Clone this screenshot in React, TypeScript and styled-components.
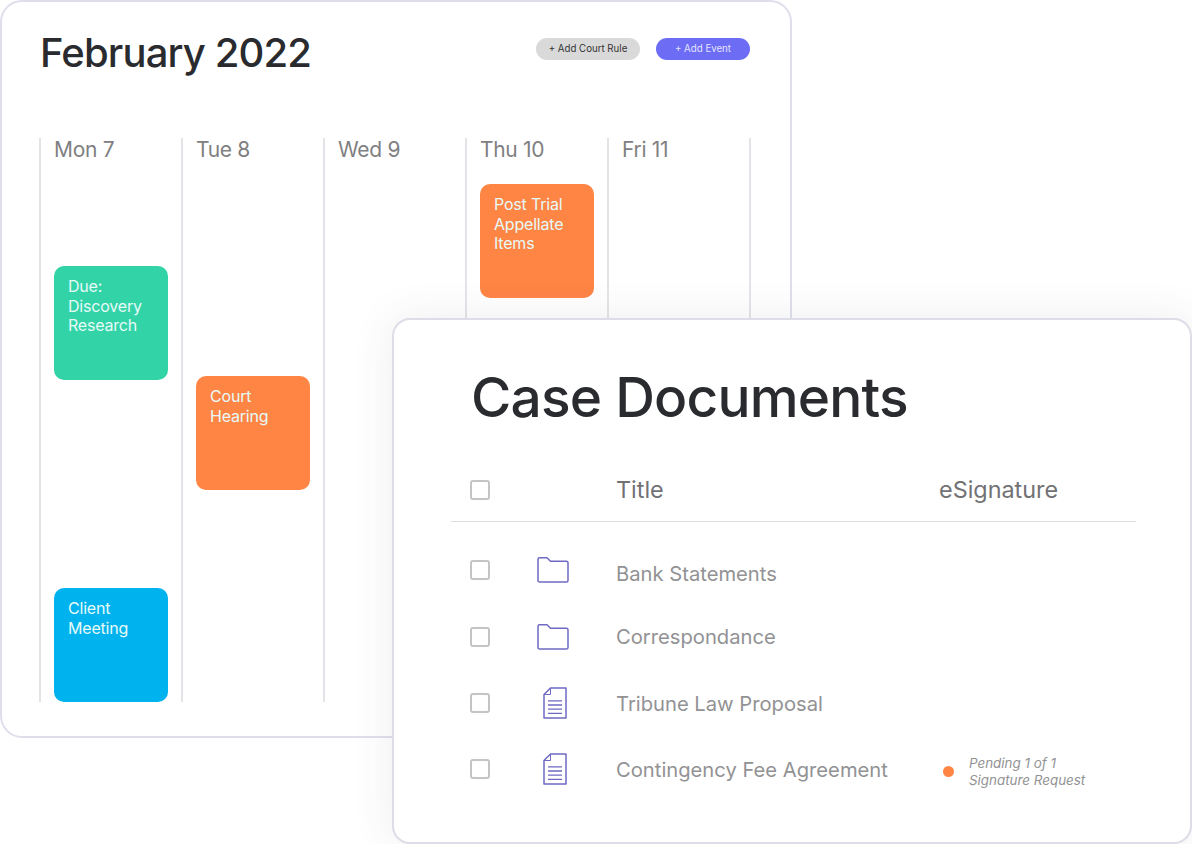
import React from "react";
import styled, { createGlobalStyle } from "styled-components";

const Global = createGlobalStyle`
  html, body { margin: 0; padding: 0; background: #fff; }
  body { font-family: Inter, "Liberation Sans", sans-serif; overflow: hidden; }
  * { box-sizing: border-box; }
`;

const Desktop = styled.div`
  position: relative;
  width: 1192px;
  height: 844px;
  background: #fff;
  overflow: hidden;
`;

const CalendarWindow = styled.section`
  width: 792px;
  height: 738px;
  background: #fff;
  border: 2px solid #dfdfec;
  border-radius: 22px;
  padding: 0 39px 0 37px;
`;

const CalendarHead = styled.header`
  height: 136px;
  padding-left: 1px;
  display: flex;
  justify-content: space-between;
  align-items: flex-start;
`;

const MonthTitle = styled.h1`
  margin: 27px 0 0;
  font-size: 40px;
  line-height: 48px;
  font-weight: 500;
  letter-spacing: -0.85px;
  color: #2a2b2e;
`;

const Actions = styled.div`
  display: flex;
  gap: 16px;
  margin: 36px 1px 0 0;
`;

const Pill = styled.button<{ $primary?: boolean }>`
  height: 22px;
  width: ${(p) => (p.$primary ? "94px" : "104px")};
  padding: 0;
  border: 0;
  border-radius: 11px;
  font: 400 9.7px/22px Inter, "Liberation Sans", sans-serif;
  background: ${(p) => (p.$primary ? "#6c6cf5" : "#d9d9d9")};
  color: ${(p) => (p.$primary ? "#e4e4ff" : "#333")};
`;

const Week = styled.div`
  display: flex;
  width: 712px;
  height: 564px;
  border-right: 2px solid #e4e4e8;
`;

const Day = styled.div`
  flex: none;
  width: 142px;
  border-left: 2px solid #e4e4e8;
  padding: 1px 0 0 13px;
`;

const DayLabel = styled.div`
  font-size: 21px;
  line-height: 22px;
  font-weight: 400;
  letter-spacing: -0.3px;
  color: #808082;
`;

const Event = styled.div<{ $color: string; $gap: number }>`
  width: 114px;
  height: 114px;
  margin-top: ${(p) => p.$gap}px;
  padding: 11px 14px;
  border-radius: 10px;
  background: ${(p) => p.$color};
  color: #e6faf8;
  font-size: 16px;
  line-height: 19.5px;
  letter-spacing: -0.2px;
`;

const DocsWindow = styled.section`
  position: absolute;
  left: 392px;
  top: 318px;
  width: 800px;
  height: 526px;
  background: #fff;
  border: 2px solid #dcdde6;
  border-radius: 18px;
  box-shadow: 0 0 44px rgba(70, 70, 100, 0.09);
  padding: 0 54px 0 57px;
`;

const DocsTitle = styled.h2`
  margin: 44px 0 0 20px;
  font-size: 55px;
  line-height: 66px;
  font-weight: 500;
  letter-spacing: -0.8px;
  color: #2a2b2e;
`;

const HeadRow = styled.div`
  display: grid;
  grid-template-columns: 20px 126px 323px 1fr;
  align-items: center;
  height: 92px;
  padding: 28px 0 0 19px;
  border-bottom: 1px solid #dcdcdc;
`;

const Rows = styled.div`
  padding-top: 14px;
`;

const Row = styled.div<{ $h: number }>`
  display: grid;
  grid-template-columns: 20px 126px 323px 1fr;
  align-items: center;
  height: ${(p) => p.$h}px;
  padding-left: 19px;
`;

const Check = styled.span`
  display: block;
  width: 20px;
  height: 20px;
  border: 2px solid #c4c4c4;
  border-radius: 3px;
`;

const IconCell = styled.span<{ $inset: number }>`
  display: flex;
  padding-left: ${(p) => p.$inset}px;
  justify-content: flex-start;
`;

const HeadLabel = styled.div`
  font-size: 23.4px;
  line-height: 30px;
  color: #727275;
`;

const DocName = styled.div<{ $drop?: number }>`
  padding-top: ${(p) => p.$drop ?? 0}px;
  font-size: 20.2px;
  line-height: 26px;
  color: #929294;
`;

const Status = styled.div`
  display: flex;
  align-items: center;
  gap: 15px;
  padding: 4px 0 0 4px;
`;

const Dot = styled.span`
  width: 11px;
  height: 11px;
  border-radius: 50%;
  background: #ff8545;
`;

const StatusText = styled.div`
  margin-top: 2px;
  font-size: 13.4px;
  line-height: 17px;
  font-style: italic;
  color: #929294;
`;

const Folder = () => (
  <svg width="32" height="26" viewBox="0 0 32 26" fill="none" stroke="#6f69c4" strokeWidth="1.5" strokeLinejoin="round">
    <path d="M1 2.4 C1 1.4 1.6 0.8 2.6 0.8 H10 L13.5 4.2 H29.4 C30.4 4.2 31 4.8 31 5.8 V23.4 C31 24.4 30.4 25 29.4 25 H2.6 C1.6 25 1 24.4 1 23.4 Z" />
  </svg>
);

const Doc = () => (
  <svg width="24" height="32" viewBox="0 0 24 32" fill="none" stroke="#6f69c4" strokeWidth="1.5" strokeLinejoin="round">
    <path d="M7.5 1 H23 V31 H1 V7.5 Z" />
    <path d="M7.5 1 V7.5 H1" strokeWidth="1" />
    <path d="M5 13.8 H19 M5 18 H19 M5 22.2 H19 M5 26.4 H19" strokeWidth="1.3" />
  </svg>
);

export default function App() {
  return (
    <Desktop>
      <Global />
      <CalendarWindow>
        <CalendarHead>
          <MonthTitle>February 2022</MonthTitle>
          <Actions>
            <Pill>+ Add Court Rule</Pill>
            <Pill $primary>+ Add Event</Pill>
          </Actions>
        </CalendarHead>
        <Week>
          <Day>
            <DayLabel>Mon 7</DayLabel>
            <Event $color="#33d3a8" $gap={105}>Due: Discovery Research</Event>
            <Event $color="#00b2ee" $gap={208}>Client Meeting</Event>
          </Day>
          <Day>
            <DayLabel>Tue 8</DayLabel>
            <Event $color="#ff8545" $gap={215}>Court Hearing</Event>
          </Day>
          <Day>
            <DayLabel>Wed 9</DayLabel>
          </Day>
          <Day>
            <DayLabel>Thu 10</DayLabel>
            <Event $color="#ff8545" $gap={23}>Post Trial Appellate Items</Event>
          </Day>
          <Day>
            <DayLabel>Fri 11</DayLabel>
          </Day>
        </Week>
      </CalendarWindow>
      <DocsWindow>
        <DocsTitle>Case Documents</DocsTitle>
        <HeadRow>
          <Check />
          <span />
          <HeadLabel>Title</HeadLabel>
          <HeadLabel>eSignature</HeadLabel>
        </HeadRow>
        <Rows>
          <Row $h={67}>
            <Check />
            <IconCell $inset={47}><Folder /></IconCell>
            <DocName $drop={8}>Bank Statements</DocName>
          </Row>
          <Row $h={68}>
            <Check />
            <IconCell $inset={47}><Folder /></IconCell>
            <DocName>Correspondance</DocName>
          </Row>
          <Row $h={64}>
            <Check />
            <IconCell $inset={53}><Doc /></IconCell>
            <DocName $drop={2}>Tribune Law Proposal</DocName>
          </Row>
          <Row $h={68}>
            <Check />
            <IconCell $inset={53}><Doc /></IconCell>
            <DocName $drop={2}>Contingency Fee Agreement</DocName>
            <Status>
              <Dot />
              <StatusText>Pending 1 of 1<br />Signature Request</StatusText>
            </Status>
          </Row>
        </Rows>
      </DocsWindow>
    </Desktop>
  );
}
